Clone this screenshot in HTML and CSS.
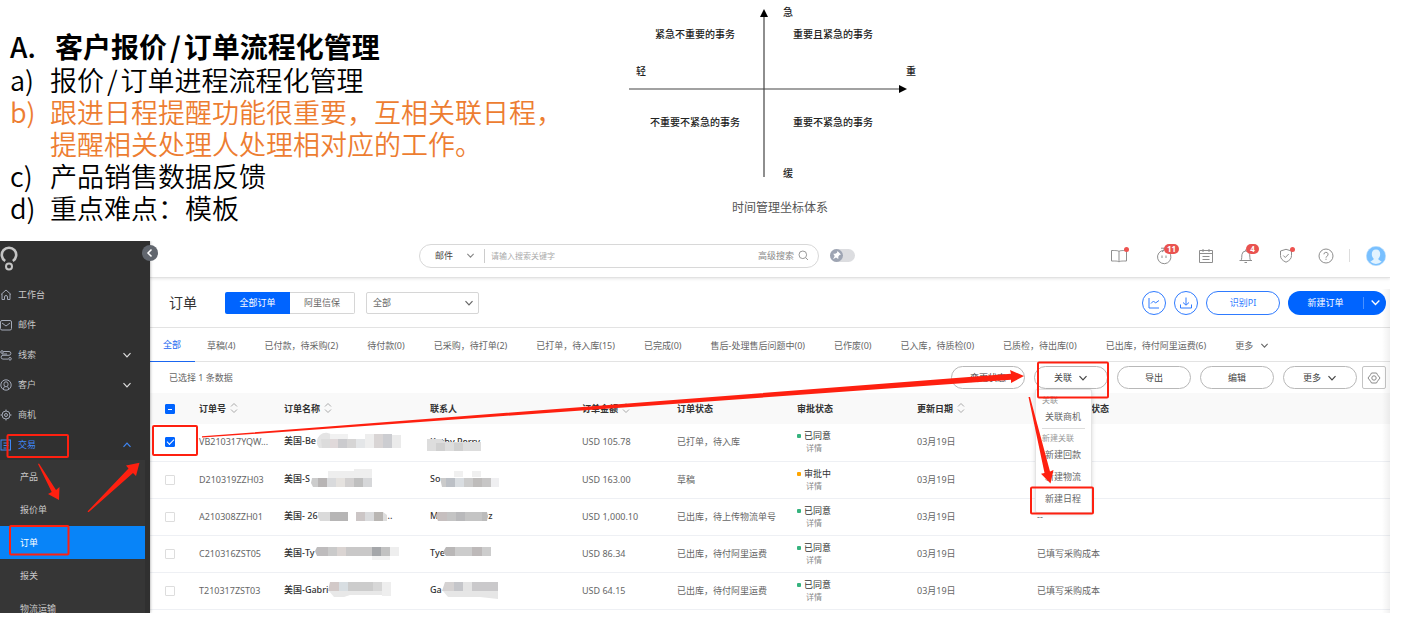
FILE: index.html
```html
<!DOCTYPE html>
<html lang="zh-CN">
<head>
<meta charset="utf-8">
<title>客户报价/订单流程化管理</title>
<link rel="stylesheet" href="styles.css">
</head>
<body>
<svg class="defs" aria-hidden="true">
  <symbol id="down" viewBox="0 0 10 10"><path d="M1.5 3.2 5 6.8 8.500 3.200" fill="none" stroke="currentColor" stroke-width="1.2"/></symbol>
  <symbol id="sort" viewBox="0 0 8 12"><path d="M1 4.500 4 1.500 7 4.500M1 7.500 4 10.500 7 7.500" fill="none" stroke="#aaa" stroke-width="1"/></symbol>
</svg>

<section class="intro">
  <div class="notes">
    <h1 class="notes-title"><span class="mark">A.</span><span>客户报价<span class="slash">/</span>订单流程化管理</span></h1>
    <p class="note"><span class="mark">a)</span><span>报价<span class="slash">/</span>订单进程流程化管理</span></p>
    <p class="note note-hot"><span class="mark">b)</span><span>跟进日程提醒功能很重要，互相关联日程，<br>提醒相关处理人处理相对应的工作。</span></p>
    <p class="note"><span class="mark">c)</span><span>产品销售数据反馈</span></p>
    <p class="note"><span class="mark">d)</span><span>重点难点：模板</span></p>
  </div>
  <svg class="matrix" width="310" height="230" viewBox="620 0 310 230">
    <path d="M629 89H900M764 15V177" stroke="#444" stroke-width="1.2"/>
    <path d="M764 9l4 8h-8zM907 89l-8-4v8z" fill="#000"/>
    <g class="matrix-text">
      <text x="783" y="16">急</text>
      <text x="655" y="38">紧急不重要的事务</text>
      <text x="793" y="38">重要且紧急的事务</text>
      <text x="636" y="75">轻</text>
      <text x="906" y="75">重</text>
      <text x="650" y="126">不重要不紧急的事务</text>
      <text x="793" y="126">重要不紧急的事务</text>
      <text x="783" y="177">缓</text>
    </g>
    <text class="matrix-caption" x="732" y="212">时间管理坐标体系</text>
  </svg>
</section>

<section class="app">
  <aside class="sidebar">
    <svg class="logo" width="18" height="28" viewBox="0 0 18 28" fill="none" stroke="#c4c4c4"><path d="M5.200 16A7.200 7.200 0 1 1 12.800 16" stroke-width="2.600"/><circle cx="9" cy="21.500" r="3" stroke-width="2"/></svg>
    <nav class="nav">
      <a class="nav-item" href="#"><svg width="12" height="12" viewBox="0 0 12 12"><path d="M1 5.500 6 1l5 4.500M2 5v5.500h2.500V8a1.500 1.500 0 0 1 3 0v2.500H10V5"/></svg>工作台</a>
      <a class="nav-item" href="#"><svg width="12" height="12" viewBox="0 0 12 12"><rect x=".5" y="1.500" width="11" height="9.500" rx="1.500"/><path d="M2 4l4 3 4-3"/></svg>邮件</a>
      <a class="nav-item" href="#"><svg width="12" height="12" viewBox="0 0 12 12"><circle cx="2" cy="3" r="1.300"/><path d="M3.300 2.500H9a1.800 1.800 0 0 1 0 3.800H3a1.800 1.800 0 0 0 0 3.800h5M2 5h5"/><circle cx="10" cy="9.800" r="1.300"/></svg>线索<svg class="caret" width="10" height="10"><use href="#down"/></svg></a>
      <a class="nav-item" href="#"><svg width="12" height="12" viewBox="0 0 12 12"><circle cx="6" cy="6" r="5.200"/><rect x="4" y="2.800" width="4" height="5" rx="2"/><path d="M3 10l1.500-2.300M9 10 7.500 7.700"/></svg>客户<svg class="caret" width="10" height="10"><use href="#down"/></svg></a>
      <a class="nav-item" href="#"><svg width="12" height="12" viewBox="0 0 12 12"><circle cx="6" cy="6" r="4"/><circle cx="6" cy="6" r="1.500"/><path d="M6 .5V2M6 10v1.500M.5 6H2M10 6h1.500"/></svg>商机</a>
      <a class="nav-item nav-open" href="#"><svg width="12" height="12" viewBox="0 0 12 12"><rect x="1" y="1" width="9.500" height="10"/><path d="M3.500 4h5M3.500 6.500h5M3.500 9h3"/></svg>交易<svg class="caret caret-up" width="10" height="10"><use href="#down"/></svg></a>
    </nav>
    <nav class="subnav">
      <a href="#">产品</a>
      <a href="#">报价单</a>
      <a class="current" href="#">订单</a>
      <a href="#">报关</a>
      <a href="#">物流运输</a>
    </nav>
    <button class="collapse" aria-label="收起菜单"><svg width="10" height="10" viewBox="0 0 10 10"><path d="M6.500 1.500 3 5l3.500 3.500" fill="none" stroke="#fff" stroke-width="1.500"/></svg></button>
  </aside>

  <main class="main">
    <header class="topbar">
      <form class="search">
        <span class="pick pick-plain"><select aria-label="搜索范围"><option>邮件</option></select><svg width="9" height="9"><use href="#down"/></svg></span>
        <input type="search" aria-label="搜索" placeholder="请输入搜索关键字">
        <a href="#">高级搜索</a>
        <button type="button" aria-label="搜索"><svg width="11" height="11" viewBox="0 0 11 11" fill="none" stroke="#999"><circle cx="4.800" cy="4.800" r="3.800"/><path d="M7.600 7.600 10 10"/></svg></button>
      </form>
      <button class="pin" aria-label="固定"><svg width="13" height="13" viewBox="0 0 13 13"><circle cx="6.500" cy="6.500" r="6.500" fill="#9ea5b3"/><path d="M7.500 2 11 5.500 9.500 6l-1.200 1.500V10L6 8.500 3 10.300 4.700 7 3.200 4.700h2L7 3.800z" fill="#fff"/></svg></button>
      <div class="tools">
        <button class="wide" aria-label="帮助手册"><svg width="20" height="20" viewBox="0 0 20 20"><path d="M10 5v11M10 5.500C9 4.500 7.500 4.500 2.500 4.500v10.500c5 0 6.500 0 7.500 1 1-1 2.500-1 7.500-1V4.500c-5 0-6.500 0-7.500 1z"/></svg><i class="dot"></i></button>
        <button class="wide" aria-label="待办 11"><svg width="20" height="20" viewBox="0 0 20 20"><path d="M15 6.300A6.700 6.700 0 1 1 10 4.300L8 6M7 2.200h4M10 2.200v2M8 9.500v2.500M12 9.500v2.500"/></svg><i class="badge">11</i></button>
        <button aria-label="日程"><svg width="20" height="20" viewBox="0 0 20 20"><path d="M3.500 4.500h13v12h-13zM3.500 7.500h13M7 3v3M13 3v3M6.500 10.500h7M6.500 13.500h7"/></svg></button>
        <button aria-label="通知 4"><svg width="20" height="20" viewBox="0 0 20 20"><path d="M3.500 14.500h12.500M5 14.500c1-1.500.6-4 1-6.200A4 4 0 0 1 9.700 5a4 4 0 0 1 3.900 3.300c.4 2.200 0 4.700 1 6.200M9.700 5V3.500M8.500 16.500h2.500"/></svg><i class="badge">4</i></button>
        <button aria-label="安全"><svg width="20" height="20" viewBox="0 0 20 20"><path d="M10 3.300 15.500 5v4.500c0 3.300-2 5-5.500 6.700-3.500-1.700-5.500-3.400-5.500-6.700V5zM7.300 9.500l2 2 3.400-3.500"/></svg><i class="dot"></i></button>
        <button aria-label="帮助"><svg width="20" height="20" viewBox="0 0 20 20"><circle cx="10" cy="10" r="7"/><path d="M7.900 8.300a2.100 2.100 0 1 1 3 2c-.7.4-.9.700-.9 1.300M10 12.700v1.200"/></svg></button>
        <span class="rule"></span>
        <button aria-label="账户"><svg class="avatar" width="20" height="20" viewBox="0 0 20 20"><circle cx="10" cy="10" r="9.700" fill="#79c0ff" stroke="#c4e2fc" stroke-width=".6"/><path d="M10 3.500c2.800 0 4.200 1.800 4.200 4.500 0 2-.9 3.500-1.800 4.500v1l3.300 2.300a8.800 8.800 0 0 1-11.400 0l3.300-2.300v-1C6.700 11.500 5.800 10 5.800 8c0-2.700 1.400-4.500 4.200-4.500z" fill="#e2f3ff"/></svg></button>
      </div>
    </header>

    <div class="titlebar">
      <h2>订单</h2>
      <div class="segments"><button class="on">全部订单</button><button>阿里信保</button></div>
      <span class="pick"><select aria-label="订单范围"><option>全部</option></select><svg width="10" height="10"><use href="#down"/></svg></span>
      <div class="title-actions">
        <button class="round" aria-label="统计"><svg width="14" height="14" viewBox="0 0 14 14"><path d="M2 2v10h10M4 7.500 6.500 5l2 2L12 4.500"/></svg></button>
        <button class="round" aria-label="下载"><svg width="14" height="14" viewBox="0 0 14 14"><path d="M7 1.500V9M4 6.500 7 9.200l3-2.700M1.500 8.500V12h11V8.500"/></svg></button>
        <button class="outline">识别PI</button>
        <div class="split"><button>新建订单</button><button aria-label="更多新建"><svg width="11" height="11"><use href="#down"/></svg></button></div>
      </div>
    </div>

    <nav class="tabs">
      <a class="active" href="#">全部</a>
      <a href="#">草稿(4)</a>
      <a href="#">已付款，待采购(2)</a>
      <a href="#">待付款(0)</a>
      <a href="#">已采购，待打单(2)</a>
      <a href="#">已打单，待入库(15)</a>
      <a href="#">已完成(0)</a>
      <a href="#">售后-处理售后问题中(0)</a>
      <a href="#">已作废(0)</a>
      <a href="#">已入库，待质检(0)</a>
      <a href="#">已质检，待出库(0)</a>
      <a href="#">已出库，待付阿里运费(6)</a>
      <a href="#">更多<svg width="9" height="9"><use href="#down"/></svg></a>
    </nav>

    <div class="toolbar">
      <span class="picked">已选择 1 条数据</span>
      <button class="pill">变更状态</button>
      <div class="menu-anchor">
        <button class="pill">关联<svg width="10" height="10"><use href="#down"/></svg></button>
        <div class="menu">
          <span class="menu-label">关联</span>
          <a href="#">关联商机</a>
          <hr>
          <span class="menu-label">新建关联</span>
          <a href="#">新建回款</a>
          <a href="#">新建物流</a>
          <a href="#">新建日程</a>
        </div>
      </div>
      <button class="pill">导出</button>
      <button class="pill">编辑</button>
      <button class="pill">更多<svg width="10" height="10"><use href="#down"/></svg></button>
      <button class="gear" aria-label="设置"><svg width="14" height="14" viewBox="0 0 14 14" fill="none" stroke="#888"><path d="M4.500 2h5l1 1.800L13 7l-2.500 3.200-1 1.800h-5l-1-1.800L1 7l2.500-3.200z"/><circle cx="7" cy="7" r="2.200"/></svg></button>
    </div>

    <table class="orders">
      <colgroup><col class="c-check"><col class="c-no"><col class="c-name"><col class="c-contact"><col class="c-sum"><col class="c-mid"><col class="c-mid"><col class="c-mid"><col></colgroup>
      <thead>
        <tr>
          <th><input class="some" type="checkbox" aria-label="全选"></th>
          <th>订单号<svg width="8" height="12"><use href="#sort"/></svg></th>
          <th>订单名称<svg width="8" height="12"><use href="#sort"/></svg></th>
          <th>联系人</th>
          <th>订单金额<svg width="8" height="12"><use href="#sort"/></svg></th>
          <th>订单状态</th>
          <th>审批状态</th>
          <th>更新日期<svg width="8" height="12"><use href="#sort"/></svg></th>
          <th>采购成本填写状态</th>
        </tr>
      </thead>
      <tbody>
        <tr>
          <td><input type="checkbox" aria-label="选择 VB210317YQW" checked></td>
          <td>VB210317YQW...</td>
          <td class="strong">美国-Be<svg width="88" height="20" viewBox="0 0 88 20"><path d="M3 18a9 9 0 1 1 14-12v12z" fill="#e4e4e4"/><path d="M14 4h18v5H14z" fill="#f1f1f1"/><path d="M5 9h9v9H6z" fill="#dcdcdc"/><path d="M14 9h8v9h-8z" fill="#e0d9da"/><path d="M22 9h9v9h-9z" fill="#cbcbce"/><path d="M31 9h9v9h-9z" fill="#d6d5d5"/><path d="M40 9h9v9h-9z" fill="#e4e6e8"/><path d="M49 4h9v14h-9z" fill="#eee"/><path d="M58 4h9v14h-9z" fill="#d9d5d5"/><path d="M67 4h9v14h-9z" fill="#cccdd1"/><path d="M76 5h9v13h-9z" fill="#ebebeb"/></svg></td>
          <td class="strong covered">Kathy Perry<svg width="56" height="20" viewBox="0 0 56 20"><path d="M0 3h14l5 3h35v9H0z" fill="#ddd"/><path d="M9 7h9v8H9zM27 7h9v8h-9z" fill="#d0d0d0"/></svg></td>
          <td>USD 105.78</td><td>已打单，待入库</td>
          <td><div class="review"><span>已同意</span><a href="#">详情</a></div></td>
          <td>03月19日</td><td></td>
        </tr>
        <tr>
          <td><input type="checkbox" aria-label="选择 D210319ZZH03"></td>
          <td>D210319ZZH03</td>
          <td class="strong">美国-S<svg width="64" height="20" viewBox="0 0 64 20"><path d="M18 3h26V1h18v9H18z" fill="#eee"/><path d="M2 10h6v9H3l-2-4z" fill="#ccc"/><path d="M8 10h9v9H8z" fill="#b7b4b4"/><path d="M17 10h9v9h-9z" fill="#d9dadc"/><path d="M26 10h9v9h-9z" fill="#e5e2df"/><path d="M35 10h9v9h-9z" fill="#d2d0d0"/><path d="M44 10h9v9h-9z" fill="#bfbfbf"/><path d="M53 10h9v9h-9z" fill="#d6d7d9"/></svg></td>
          <td class="strong">So<svg width="62" height="20" viewBox="0 0 62 20"><path d="M14 3h9v6h-9zM32 3h9v6h-9z" fill="#f0f0f0"/><path d="M0 10h6v9H2z" fill="#cbcbcb"/><path d="M6 10h9v9H6z" fill="#bcc0c6"/><path d="M15 10h9v9h-9z" fill="#d9dde1"/><path d="M24 10h9v9h-9z" fill="#ccc"/><path d="M33 10h9v9h-9z" fill="#bebcbb"/><path d="M42 10h9v9h-9z" fill="#c7c6c6"/><path d="M51 10h8v9h-8z" fill="#efeff1"/></svg></td>
          <td>USD 163.00</td><td>草稿</td>
          <td><div class="review pending"><span>审批中</span><a href="#">详情</a></div></td>
          <td>03月19日</td><td></td>
        </tr>
        <tr>
          <td><input type="checkbox" aria-label="选择 A210308ZZH01"></td>
          <td>A210308ZZH01</td>
          <td class="strong">美国- 26<svg width="70" height="20" viewBox="0 0 70 20"><path d="M0 7h12v9H2l-2-4z" fill="#dadada"/><path d="M12 7h18v9H12z" fill="#b6b5b5"/><path d="M38 7h9v9h-9z" fill="#ccc6c6"/><path d="M47 7h9v9h-9z" fill="#dadbdd"/><path d="M56 7h9v9h-9z" fill="#b9b6b3"/><path d="M65 7l4 3v6h-4z" fill="#ddd"/></svg>..</td>
          <td class="strong">M<svg class="tuck" width="52" height="20" viewBox="0 0 52 20"><path d="M1 7h10v9H2L0 11z" fill="#c6bfbf"/><path d="M11 7h35v9H11z" fill="#c4c4c4"/><path d="M20 7h9v9h-9z" fill="#b9b9bb"/><path d="M46 7h5l1 4-1 5h-5z" fill="#bbb"/></svg>z</td>
          <td>USD 1,000.10</td><td>已出库，待上传物流单号</td>
          <td><div class="review"><span>已同意</span><a href="#">详情</a></div></td>
          <td>03月19日</td><td>--</td>
        </tr>
        <tr>
          <td><input type="checkbox" aria-label="选择 C210316ZST05"></td>
          <td>C210316ZST05</td>
          <td class="strong">美国-Ty<svg width="86" height="20" viewBox="0 0 86 20"><path d="M2 5h11v9H2L0 9z" fill="#bebcbd"/><path d="M13 5h9v9h-9z" fill="#cacaca"/><path d="M22 5h9v9h-9z" fill="#dad4d2"/><path d="M31 5h26v9H31z" fill="#c9c8c8"/><path d="M57 5h9v9h-9z" fill="#a5a7aa"/><path d="M66 5h9v9h-9z" fill="#c2c2c2"/><path d="M75 5h9v9h-9z" fill="#eee"/><path d="M57 14h18v4H57z" fill="#f3f3f3"/></svg></td>
          <td class="strong">Tye<svg class="tuck" width="50" height="20" viewBox="0 0 50 20"><path d="M3 5h9v9H3L0 10z" fill="#b9b7b7"/><path d="M12 5h17v9H12z" fill="#ccc"/><path d="M29 5h10v9H29z" fill="#bdb9b9"/><path d="M39 5h9v9h-9z" fill="#cdcdcd"/></svg></td>
          <td>USD 86.34</td><td>已出库，待付阿里运费</td>
          <td><div class="review"><span>已同意</span><a href="#">详情</a></div></td>
          <td>03月19日</td><td>已填写采购成本</td>
        </tr>
        <tr>
          <td><input type="checkbox" aria-label="选择 T210317ZST03"></td>
          <td>T210317ZST03</td>
          <td class="strong">美国-Gabri<svg width="66" height="20" viewBox="0 0 66 20"><path d="M2 3h9v9H0z" fill="#d2c9c8"/><path d="M11 3h9v9h-9z" fill="#d8dee2"/><path d="M20 3h25v9H20z" fill="#ccc"/><path d="M45 3h9v9h-9z" fill="#d7d7d7"/><path d="M54 3h9v14h-9z" fill="#eee"/><path d="M1 12h53v4H22l-6 2H6z" fill="#e8e8e8"/></svg></td>
          <td class="strong">Ga<svg width="64" height="20" viewBox="0 0 64 20"><path d="M3 3h9v9H0z" fill="#d5d2d2"/><path d="M12 3h9v9h-9z" fill="#c5c6ca"/><path d="M21 3h9v9h-9z" fill="#e4e4e4"/><path d="M30 3h26v9H30z" fill="#cac9cb"/><path d="M1 12h55v8L38 18H6z" fill="#e6e6e6"/></svg></td>
          <td>USD 64.15</td><td>已出库，待付阿里运费</td>
          <td><div class="review"><span>已同意</span><a href="#">详情</a></div></td>
          <td>03月19日</td><td>已填写采购成本</td>
        </tr>
      </tbody>
    </table>
  </main>

  <svg class="callouts" width="1390" height="372" viewBox="0 241 1390 372" aria-hidden="true">
    <g fill="none" stroke="#fe2010" stroke-width="2">
      <rect x="7.500" y="435" width="60.500" height="22" rx="1"/>
      <rect x="10" y="526" width="58.500" height="28.500" rx="1"/>
      <rect x="153" y="426" width="44" height="29" rx="1"/>
      <rect x="1038" y="362.500" width="70" height="35" rx="1"/>
      <rect x="1031" y="487.500" width="62" height="26" rx="1"/>
    </g>
    <g fill="#fe2010">
      <path d="M202 436.300 1011 373.800 1010 370 1024 376 1011 383 1011 379.800 202 437.600z"/>
      <path d="M1028.500 397 1030 397 1050 471.500 1053.500 470 1050.500 483.500 1041 473.800 1044.500 473z"/>
      <path d="M38 464 39 463.500 56 490 59.500 487 59 500 48 494 51.700 492z"/>
      <path d="M87.500 511.500 128.500 468.500 126 465.500 139.500 462.800 136 476 133 473 88.500 512.300z"/>
    </g>
  </svg>
</section>
</body>
</html>
```

FILE: styles.css
```css
* { box-sizing: border-box; }

body {
  margin: 0;
  background: #fff;
  color: #666;
  font-family: "Noto Sans", "Noto Sans CJK SC", sans-serif;
  font-size: 9px;
  line-height: 12px;
}

button, input, select {
  margin: 0;
  padding: 0;
  border: 0;
  background: none;
  color: inherit;
  font: inherit;
}

a { color: inherit; text-decoration: none; }
svg { flex: none; }
.defs { position: absolute; width: 0; height: 0; }

/* Notes and priority matrix */
.intro { display: flex; min-height: 241px; }

.notes {
  flex: 0 0 620px;
  padding: 30px 0 0 10px;
  color: #000;
  font-family: "Noto Sans CJK SC", sans-serif;
  font-size: 27px;
  font-weight: 350;
  line-height: 32px;
}

.notes-title, .note { display: flex; margin: 0; }
.notes-title { padding-bottom: 2px; font-size: 28px; font-weight: 700; }
.mark { flex: 0 0 40px; }
.notes-title .mark { flex-basis: 45px; font-weight: 500; }
.slash { padding: 0 3px; }
.note-hot { color: #ed7d31; }

.matrix-text { font: 500 10px "Noto Sans CJK SC", sans-serif; fill: #222; }
.matrix-caption { font: 12px "Noto Sans CJK SC", sans-serif; fill: #555; }

/* Application frame */
.app {
  position: relative;
  display: flex;
  height: 372px;
  margin-right: 15px;
  overflow: hidden;
}

.app::after {
  content: "";
  position: absolute;
  top: 48px;
  right: 0;
  bottom: 0;
  width: 8px;
  background: linear-gradient(to right, rgba(0, 0, 0, 0), rgba(0, 0, 0, .06));
}

.sidebar {
  position: relative;
  z-index: 1;
  flex: 0 0 150px;
  background: #303030;
  color: #c8c8c8;
  box-shadow: 0 0 3px rgba(0, 0, 0, .4);
}

.logo { display: block; margin: 4px 0 7px; }

.nav-item {
  display: flex;
  align-items: center;
  gap: 6px;
  height: 30px;
  padding-right: 18px;
}

.nav-item svg { fill: none; stroke: #a3a9b8; }
.nav-item .caret { margin-left: auto; color: #ddd; stroke: none; }
.nav-item .caret-up { color: #3f87f5; transform: rotate(180deg); }
.nav-open { color: #3f87f5; }
.nav-item.nav-open > svg:first-child { stroke: #3f87f5; }

.subnav { margin-right: 5px; background: #363636; }
.subnav a { display: block; padding-left: 20px; line-height: 33px; }
.subnav .current { background: #0884f8; color: #fff; }

.collapse {
  position: absolute;
  top: 4px;
  right: -8px;
  display: grid;
  place-items: center;
  width: 16px;
  height: 16px;
  border-radius: 50%;
  background: #61666e;
}

.main { flex: 1; min-width: 0; }

/* Top bar */
.topbar {
  position: relative;
  display: flex;
  align-items: center;
  height: 37px;
  padding: 0 4px 7px 269px;
  border-bottom: 1px solid #e2e2e2;
  box-shadow: 0 1px 3px rgba(0, 0, 0, .1);
}

.search {
  display: flex;
  align-items: center;
  flex: 0 1 400px;
  height: 24px;
  padding: 0 9px 0 15px;
  border: 1px solid #d8d8d8;
  border-radius: 12px;
}

.search input {
  flex: 1;
  min-width: 0;
  height: 14px;
  padding-left: 6px;
  border-left: 1px solid #ccc;
  appearance: none;
  outline: 0;
  font-size: 8px;
}

.search input::placeholder { color: #aaa; }
.search a { margin-right: 4px; color: #888; }
.search button { display: flex; }

.pick {
  position: relative;
  display: flex;
  align-items: center;
  width: 113px;
  height: 22px;
  border: 1px solid #d6d6d6;
  border-radius: 2px;
}

.pick select { width: 100%; height: 100%; padding-left: 6px; appearance: none; }
.pick svg { position: absolute; right: 4px; pointer-events: none; }
.pick-plain { width: 49px; border: 0; color: #444; }
.pick-plain select { padding: 0; }
.pick-plain svg { right: 9px; color: #888; }

.pin {
  display: flex;
  width: 25px;
  height: 13px;
  margin-left: 11px;
  border-radius: 7px;
  background: #dcdde0;
}

.tools { display: flex; align-items: center; gap: 20px; margin-left: auto; }
.tools button { position: relative; display: flex; justify-content: center; width: 20px; }
.tools .wide { width: 25px; }
.tools svg:not(.avatar) { fill: none; stroke: #8e8e8e; }
.rule { width: 1px; height: 13px; margin: 0 -4px 0 -7px; background: #ddd; }

.dot {
  position: absolute;
  top: 1px;
  right: 1px;
  width: 5px;
  height: 5px;
  border-radius: 50%;
  background: #ee5350;
}

.badge {
  position: absolute;
  top: -2px;
  left: 10px;
  min-width: 13px;
  padding: 0 3px;
  border-radius: 5px;
  background: #e95350;
  color: #fff;
  font-size: 8px;
  font-style: normal;
  font-weight: 700;
  line-height: 10px;
}

.wide .dot { right: 2px; }
.wide .badge { left: 13px; }

/* Title row */
.titlebar {
  display: flex;
  align-items: center;
  height: 50px;
  padding: 0 4px 0 19px;
  border-bottom: 1px solid #e3e3e3;
}

.titlebar h2 {
  margin: 0 28px 0 0;
  color: #333;
  font-size: 14px;
  font-weight: 400;
  line-height: 20px;
}

.segments { display: flex; margin-right: 11px; }
.segments button { width: 65px; height: 22px; border: 1px solid #d6d6d6; border-left: 0; border-radius: 0 2px 2px 0; }
.segments .on { border: 0; border-radius: 2px 0 0 2px; background: #0064ff; color: #fff; }

.title-actions { display: flex; gap: 8px; margin-left: auto; }
.title-actions svg { fill: none; stroke: currentColor; }
.title-actions > button { height: 24px; border: 1px solid #2f7bff; border-radius: 12px; color: #2f7bff; }
.round { display: grid; place-items: center; width: 24px; }
.title-actions .outline { width: 74px; }
.split { display: flex; align-items: center; height: 24px; border-radius: 12px; background: #0064ff; color: #fff; }
.split button:first-child { width: 75px; }
.split button:last-child { display: grid; place-items: center; width: 23px; height: 12px; border-left: 1px solid #4a92ff; }
.split svg { stroke: none; }

/* Status tabs */
.tabs {
  display: flex;
  gap: 29px;
  height: 34px;
  padding-left: 13px;
  border-bottom: 1px solid #e3e3e3;
  line-height: 35px;
  white-space: nowrap;
}

.tabs a { display: flex; align-items: center; gap: 7px; height: 34px; }
.tabs .active { margin: 0 -17px 0 -13px; padding: 0 14px 0 13px; border-bottom: 1px solid #1a66f0; color: #1a66f0; }

/* Bulk actions */
.toolbar {
  display: flex;
  align-items: center;
  gap: 9px;
  height: 31px;
  padding: 0 4px 0 19px;
}

.picked { margin-right: auto; font-size: 9px; }

.pill {
  display: flex;
  align-items: center;
  justify-content: center;
  gap: 6px;
  width: 74px;
  height: 23px;
  border: 1px solid #b8b8b8;
  border-radius: 12px;
  background: #fff;
  color: #444;
}

.gear {
  display: grid;
  place-items: center;
  width: 24px;
  height: 23px;
  margin-left: -4px;
  border: 1px solid #c4c4c4;
  border-radius: 2px;
}

.menu-anchor { position: relative; }

.menu {
  position: absolute;
  z-index: 1;
  top: 100%;
  left: 1px;
  width: 57px;
  padding: 3px 6px 2px;
  border: 1px solid #e4e4e4;
  border-radius: 2px;
  background: #fff;
  box-shadow: 0 1px 4px rgba(0, 0, 0, .15);
  white-space: nowrap;
}

.menu a { display: block; padding-left: 3px; line-height: 22px; }
.menu-label { display: block; color: #999; font-size: 8px; line-height: 13px; }
.menu hr { margin: 0 0 2px; border: 0; border-top: 1px solid #ddd; }

/* Orders */
.orders { width: 100%; border-collapse: collapse; table-layout: fixed; }
.c-check { width: 49px; }
.c-no { width: 85px; }
.c-name { width: 146px; }
.c-contact { width: 152px; }
.c-sum { width: 95px; }
.c-mid { width: 120px; }

.orders th, .orders td { padding: 0; text-align: left; white-space: nowrap; }
.orders th { height: 31px; background: #f9f9f9; color: #333; font-weight: 700; }
.orders th svg { margin: -2px 0 0 4px; vertical-align: middle; }
.orders td { height: 37px; border-bottom: 1px solid #eef0f4; }
.orders td svg { margin-top: -4px; vertical-align: middle; }
.orders .strong { color: #333; font-weight: 500; }
.orders .tuck { margin-left: -2px; }
.covered { position: relative; }
.orders .covered svg { position: absolute; top: 16px; left: -3px; }

.orders input {
  display: block;
  width: 10px;
  height: 10px;
  margin-left: 15px;
  border: 1px solid #ddd;
  border-radius: 1px;
  appearance: none;
}

.orders input:checked, .orders .some { border-color: #0064ff; background: #0064ff; }
.orders input:checked::after {
  content: "";
  display: block;
  width: 6px;
  height: 3px;
  margin: 1px;
  border: solid #fff;
  border-width: 0 0 1px 1px;
  transform: rotate(-45deg);
}

.orders .some::after { content: ""; display: block; height: 1px; margin: 4px 2px 0; background: #fff; }

.review { position: relative; padding-left: 7px; color: #333; }
.review span, .review a { display: block; }
.review a { padding-left: 2px; color: #888; font-size: 8px; }
.review::before {
  content: "";
  position: absolute;
  top: 4px;
  left: 0;
  width: 4px;
  height: 4px;
  border-radius: 1px;
  background: #36b37e;
}
.pending::before { background: #ffa500; }

/* Arrows and frames drawn over the application */
.callouts { position: absolute; z-index: 2; top: 0; left: 0; pointer-events: none; }
```
